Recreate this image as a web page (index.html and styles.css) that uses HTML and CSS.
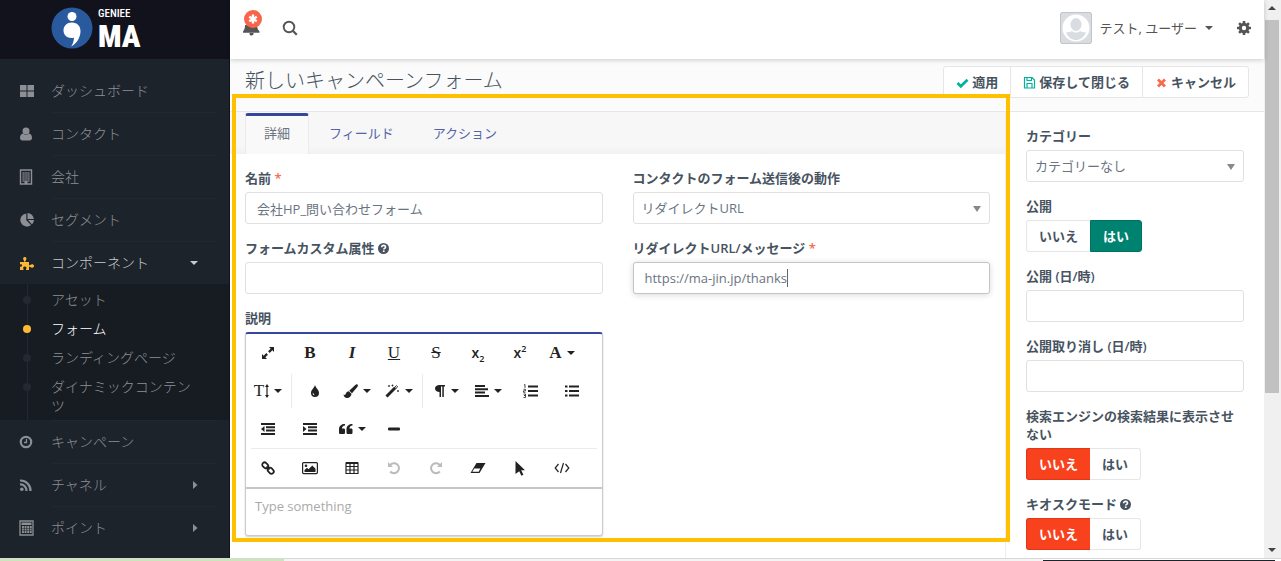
FILE: index.html
```html
<!DOCTYPE html>
<html lang="ja">
<head>
  <meta charset="UTF-8" />
  <meta name="viewport" content="width=device-width, initial-scale=1.0" />
  <title>新しいキャンペーンフォーム</title>
  <link rel="stylesheet" href="styles.css">
</head>
<body>
  <svg class="sprite" aria-hidden="true">
    <symbol id="i-help" viewBox="0 0 12 12">
      <circle cx="6" cy="6" r="6" />
      <path d="M4 4.600C4 3.200 5 2.600 6.100 2.600S8.200 3.300 8.200 4.500C8.200 5.900 6.300 5.900 6.300 7.200" fill="none" stroke="#fff" stroke-width="1.700" />
      <rect x="5.300" y="8.100" width="1.900" height="1.700" fill="#fff" />
    </symbol>
    <symbol id="i-caret" viewBox="0 0 8 4"><path d="M0 0h8L4 4z" /></symbol>
  </svg>

  <div class="window">
    <aside class="sidebar">
      <a class="logo" href="#">
        <svg width="42" height="42" viewBox="0 0 42 42">
          <circle cx="21" cy="21" r="20.500" fill="#2a5a9e" />
          <circle cx="21" cy="9.500" r="4.500" fill="#fff" />
          <path d="M21 15.500c-5 0-8.500 3.500-8.500 8 0 4.400 3.400 7.500 8 7.500 1.500 0 2.500-.2 2.500-.2-.2 4-1.500 6.500-2.800 8.700 5.500-2.800 9.300-9 9.300-15.500 0-5-3.500-8.500-8.500-8.500z" fill="#fff" />
        </svg>
        <span class="logo-text"><small>GENIEE</small><strong>MA</strong></span>
      </a>
      <ul class="menu">
        <li><a href="#">
          <svg width="16" height="16" viewBox="0 0 16 16"><path d="M1 2h6.500v5.500H1zM8.500 2H15v5.500H8.500zM1 8.500h6.500V14H1zM8.500 8.500H15V14H8.500z" /></svg>
          <span>ダッシュボード</span></a></li>
        <li><a href="#">
          <svg width="16" height="16" viewBox="0 0 16 16"><circle cx="7" cy="5" r="3.500" /><path d="M4 7.500c-2 .3-3 2-3 4.500C1 13.500 2 14.500 3.500 14.500h7c1.500 0 2.500-1 2.500-2.500 0-2.500-1-4.200-3-4.500-1.600 1.600-4.400 1.600-6 0z" /></svg>
          <span>コンタクト</span></a></li>
        <li><a href="#">
          <svg width="16" height="16" viewBox="0 0 16 16"><path d="M1.500 1h11v14h-11z" fill="none" stroke="#8c9095" stroke-width="1.400" /><path d="M3.500 4h7M3.500 6h7M3.500 8h7M3.500 10h7M3.500 12h7" stroke="#8c9095" stroke-width="1.300" stroke-dasharray="1.300 .6" /><path d="M5.500 12h3v3h-3z" /></svg>
          <span>会社</span></a></li>
        <li><a href="#">
          <svg width="16" height="16" viewBox="0 0 16 16"><path d="M7.300 1.500A6.500 6.500 0 1 0 12 13L7.300 8.200z" /><path d="M8.500 1A6.500 6.500 0 0 1 14.800 7H8.500z" /><path d="M9 8h6a6.500 6.500 0 0 1-2 4.400z" /></svg>
          <span>セグメント</span></a></li>
        <li class="open"><a href="#">
          <svg width="16" height="16" viewBox="0 0 16 16"><path d="M1 7h4c.6 0 .4-.8 0-1.300C3.600 4 4 2 5.800 2s2.200 2 .8 3.700C6.200 6.200 6 7 6.600 7H10v2.800c0 .8.700.6 1.300.1C12.800 8.800 15 9.200 15 11s-2.200 2.200-3.700 1.100c-.6-.5-1.300-.7-1.300.1V15H7.500c-.8 0-.6-.7-.3-1.200.7-1.300.1-2.300-1.400-2.300s-2.100 1-1.400 2.300c.3.500.5 1.200-.3 1.200H1v-3.500c1.500.5 2-.2 2-1s-.5-1.500-2-1z" /></svg>
          <span>コンポーネント</span>
          <svg class="arrow" width="8" height="4"><use href="#i-caret" /></svg></a>
          <ul class="submenu">
            <li><a href="#">アセット</a></li>
            <li class="active"><a href="#">フォーム</a></li>
            <li><a href="#">ランディングページ</a></li>
            <li><a href="#">ダイナミックコンテンツ</a></li>
          </ul>
        </li>
        <li><a href="#">
          <svg width="16" height="16" viewBox="0 0 16 16"><circle cx="7" cy="8" r="5.200" fill="none" stroke="#8c9095" stroke-width="2.200" /><path d="M7.500 5v3.500H5" fill="none" stroke="#8c9095" stroke-width="1.300" /></svg>
          <span>キャンペーン</span></a></li>
        <li><a href="#">
          <svg width="16" height="16" viewBox="0 0 16 16"><circle cx="2.800" cy="12.200" r="1.800" /><path d="M1 7.500A6 6 0 0 1 7.500 14M1 3.500A10 10 0 0 1 11.500 14" fill="none" stroke="#8c9095" stroke-width="2.200" /></svg>
          <span>チャネル</span>
          <svg class="arrow" width="6" height="8" viewBox="0 0 6 8"><path d="M1 0l4.500 4L1 8z" /></svg></a></li>
        <li><a href="#">
          <svg width="16" height="16" viewBox="0 0 16 16"><path d="M1 1h13v14H1z" fill="none" stroke="#8c9095" stroke-width="1.300" /><path d="M2.500 2.500h10V5h-10z" /><path d="M3 7h10M3 9.500h10M3 12h10" stroke="#8c9095" stroke-width="1.800" stroke-dasharray="1.900 .7" /></svg>
          <span>ポイント</span>
          <svg class="arrow" width="6" height="8" viewBox="0 0 6 8"><path d="M1 0l4.500 4L1 8z" /></svg></a></li>
      </ul>
    </aside>

    <main class="main">
      <header class="topbar">
        <button class="icon-btn" type="button" aria-label="通知">
          <svg width="22" height="28" viewBox="0 0 22 28">
            <path d="M3 15h12c.2 3 .7 4.500 2.500 6.500v1.200H1v-1.200C2.500 19.500 3 18 3 15zM7.500 23h4a2 2 0 0 1-4 1z" fill="#555" />
            <circle cx="11" cy="9" r="9" fill="#f8654b" />
            <path d="M11 4.600v8.800M7.200 6.800l7.600 4.400M14.800 6.800l-7.600 4.400" stroke="#fff" stroke-width="2.400" />
          </svg>
        </button>
        <button class="icon-btn" type="button" aria-label="検索">
          <svg width="16" height="16" viewBox="0 0 16 16"><circle cx="7" cy="7" r="5.300" fill="none" stroke="#555" stroke-width="1.900" /><path d="M10.800 10.800l4 4" stroke="#555" stroke-width="2.200" /></svg>
        </button>
        <button class="user" type="button">
          <svg class="avatar" width="32" height="32" viewBox="0 0 32 32">
            <circle cx="16" cy="16" r="13.500" fill="#fff" />
            <ellipse cx="16" cy="12.500" rx="5.500" ry="6.500" fill="#d9dce1" />
            <path d="M6 20.500c3-.3 5-.5 6-1.500 2 2 6 2 8 0 1 1 3 1.200 6 1.500-2 5-6 7.500-10 7.500s-8-2.500-10-7.500z" fill="#d9dce1" />
          </svg>
          <span>テスト, ユーザー</span>
          <svg width="8" height="4"><use href="#i-caret" /></svg>
        </button>
        <button class="icon-btn" type="button" aria-label="設定">
          <svg width="14" height="14" viewBox="0 0 14 14"><circle cx="7" cy="7" r="3.700" fill="none" stroke="#555" stroke-width="3" /><path d="M7 0v2.500M7 11.500V14M0 7h2.500M11.500 7H14M2.050 2.050l1.800 1.800M10.150 10.150l1.800 1.800M2.050 11.950l1.800-1.800M10.150 3.850l1.800-1.800" stroke="#555" stroke-width="2.600" /></svg>
        </button>
      </header>

      <div class="page-header">
        <h1>新しいキャンペーンフォーム</h1>
        <div class="actions">
          <button type="button"><svg width="13" height="13" viewBox="0 0 13 13"><path d="M1.500 7l3.300 3.300L11.500 3.800" fill="none" stroke="#00b49c" stroke-width="2.700" /></svg>適用</button>
          <button type="button"><svg width="13" height="13" viewBox="0 0 13 13"><path d="M1.500 1.500h7.500L11.500 4V12h-10z M4 1.500v3h4.500v-3 M4 12V7.500h5V12" fill="none" stroke="#00b49c" stroke-width="1.200" /></svg>保存して閉じる</button>
          <button type="button"><svg width="13" height="13" viewBox="0 0 13 13"><path d="M3 3.500l7 7M10 3.500l-7 7" stroke="#f86b4f" stroke-width="2.800" /></svg>キャンセル</button>
        </div>
      </div>

      <div class="content">
        <section class="pane">
          <nav class="tabs">
            <a class="active" href="#">詳細</a>
            <a href="#">フィールド</a>
            <a href="#">アクション</a>
          </nav>
          <form class="form">
            <div class="column">
              <div class="field">
                <label for="name">名前 <em>*</em></label>
                <input id="name" type="text" value="会社HP_問い合わせフォーム">
              </div>
              <div class="field">
                <label for="attr">フォームカスタム属性 <svg width="11" height="11"><use href="#i-help" /></svg></label>
                <input id="attr" type="text">
              </div>
              <div class="field">
                <label for="description">説明</label>
                <div class="editor">
                  <div class="toolbar">
                    <div class="tools">
                      <button type="button" aria-label="全画面"><svg width="14" height="14" viewBox="0 0 14 14"><path d="M8 1h5v5l-1.700-1.700-2.600 2.600-1.600-1.600 2.600-2.600zM6 13H1V8l1.700 1.700 2.600-2.600 1.600 1.600-2.600 2.600z" /></svg></button>
                      <button type="button"><b>B</b></button>
                      <button type="button"><b><i>I</i></b></button>
                      <button type="button"><u>U</u></button>
                      <button type="button"><s>S</s></button>
                      <button type="button" class="sans"><span>x<sub>2</sub></span></button>
                      <button type="button" class="sans"><span>x<sup>2</sup></span></button>
                      <button type="button"><b>A</b><svg width="8" height="4"><use href="#i-caret" /></svg></button>
                    </div>
                    <div class="tools">
                      <button type="button" aria-label="文字サイズ"><span>T</span><svg class="tight" width="4" height="14" viewBox="0 0 4 14"><path d="M2 0l2 3H2.600v8H4l-2 3-2-3h1.400V3H0z" /></svg><svg width="8" height="4"><use href="#i-caret" /></svg></button>
                      <hr>
                      <button type="button" aria-label="色"><svg width="10" height="14" viewBox="0 0 10 14"><path d="M5 1c.7 3 4 4.700 4 8a4 4 0 0 1-8 0c0-3.300 3.300-5 4-8z" /><path d="M3 8.500c-.8 1.500.2 3 1.700 2.800C4.300 10.500 3.500 10 3 8.500z" fill="#fff" /></svg></button>
                      <button type="button" aria-label="書式"><svg width="15" height="14" viewBox="0 0 15 14"><path d="M14.500.5c.8.700.4 1.700-.2 2.500L9 9.300 6.200 6.700 12.300 1c.7-.7 1.500-1 2.200-.5z" /><path d="M5.700 7.300l2.800 2.500C8.300 12.500 6.500 14 4 14 2 14 .8 12.500.5 10.500c1 .7 1.700.6 2.200-.6C3.300 8.300 4.500 7.300 5.700 7.300z" /></svg><svg width="8" height="4"><use href="#i-caret" /></svg></button>
                      <button type="button" aria-label="スタイル"><svg width="15" height="14" viewBox="0 0 15 14"><path d="M1.500 12.500l8.700-8.700" stroke="#222" stroke-width="3" /><path d="M9.800 3.200l1.700-1.600 1.200 1.200L11 4.400z" fill="#fff" stroke="#222" stroke-width=".9" /><path d="M4 1v2M3 2h2M7.500.5v2M6.500 1.500h2M13 6v2M12 7h2" stroke="#222" stroke-width=".8" /></svg><svg width="8" height="4"><use href="#i-caret" /></svg></button>
                      <hr>
                      <button type="button" aria-label="段落"><svg width="12" height="14" viewBox="0 0 12 14"><path d="M11 1v1.500H9.800V13H8.300V2.500H7V13H5.500V8C3 8 1 6.700 1 4.500S3 1 5.500 1z" /></svg><svg width="8" height="4"><use href="#i-caret" /></svg></button>
                      <button type="button" aria-label="配置"><svg width="14" height="14" viewBox="0 0 14 14"><path d="M0 2h10M0 5.300h13M0 8.600h10M0 12h14" stroke="#222" stroke-width="2" /></svg><svg width="8" height="4"><use href="#i-caret" /></svg></button>
                      <button type="button" aria-label="番号付きリスト"><svg width="15" height="14" viewBox="0 0 15 14"><path d="M5 2.500h10M5 7h10M5 11.500h10" stroke="#222" stroke-width="2" /><path d="M1 1l1-.5V4M.5 5.300h2v1.500h-2v1.500h2M.5 10h2v1.500H1h1.500V13.500H.5" fill="none" stroke="#222" stroke-width=".8" /></svg></button>
                      <button type="button" aria-label="箇条書き"><svg width="14" height="14" viewBox="0 0 14 14"><path d="M4 2.500h10M4 7h10M4 11.500h10M0 2.500h2.500M0 7h2.500M0 11.500h2.500" stroke="#222" stroke-width="2.200" /></svg></button>
                    </div>
                    <div class="tools">
                      <button type="button" aria-label="インデント解除"><svg width="14" height="14" viewBox="0 0 14 14"><path d="M0 2h14M5 5.300h9M5 8.600h9M0 12h14" stroke="#222" stroke-width="2" /><path d="M3.500 4v6L0 7z" /></svg></button>
                      <button type="button" aria-label="インデント"><svg width="14" height="14" viewBox="0 0 14 14"><path d="M0 2h14M5 5.300h9M5 8.600h9M0 12h14" stroke="#222" stroke-width="2" /><path d="M0 4v6l3.500-3z" /></svg></button>
                      <button type="button" aria-label="引用"><svg width="14" height="12" viewBox="0 0 14 12"><path id="q" d="M6 1v1.500C4 2.700 3 3.700 3 5.500h1.500C5.500 5.500 6 6 6 7v2.500C6 10.500 5.500 11 4.500 11h-3C.5 11 0 10.500 0 9.500V6c0-3 2.500-5 6-5z" /><use href="#q" x="7.500" /></svg><svg width="8" height="4"><use href="#i-caret" /></svg></button>
                      <button type="button" aria-label="水平線"><svg width="12" height="4" viewBox="0 0 12 4"><rect y=".5" width="12" height="3" rx="1" /></svg></button>
                    </div>
                    <div class="tools insert">
                      <button type="button" aria-label="リンク"><svg width="14" height="14" viewBox="0 0 14 14"><g fill="none" stroke="#222" stroke-width="1.800"><rect x="1" y="2" width="6.500" height="4.600" rx="2.300" transform="rotate(45 4.200 4.300)" /><rect x="6.500" y="7.500" width="6.500" height="4.600" rx="2.300" transform="rotate(45 9.800 9.800)" /><path d="M5.500 5.500l3 3" /></g></svg></button>
                      <button type="button" aria-label="画像"><svg width="16" height="14" viewBox="0 0 16 14"><rect x=".6" y="1.600" width="14.800" height="11" rx="1" fill="none" stroke="#222" stroke-width="1.200" /><circle cx="4" cy="4.800" r="1.300" /><path d="M2.500 11V9L5 6.800l1.500 1.500L10.300 4.500l3.200 3.300V11z" /></svg></button>
                      <button type="button" aria-label="表"><svg width="14" height="14" viewBox="0 0 14 14"><path d="M1 2h12v10.500H1zM1 5.500h12M1 9h12M5 2v10.500M9 2v10.500" fill="none" stroke="#222" stroke-width="1.200" /><path d="M1 1h12v2H1z" /></svg></button>
                      <button type="button" aria-label="元に戻す" disabled><svg width="14" height="14" viewBox="0 0 14 14"><path d="M3 4.200A5 5 0 1 1 3.200 10.500" fill="none" stroke="#bbb" stroke-width="2" /><path d="M1 1v5h5z" fill="#bbb" /></svg></button>
                      <button type="button" aria-label="やり直し" disabled><svg width="14" height="14" viewBox="0 0 14 14"><path d="M11 4.200A5 5 0 1 0 10.800 10.500" fill="none" stroke="#bbb" stroke-width="2" /><path d="M13 1v5H8z" fill="#bbb" /></svg></button>
                      <button type="button" aria-label="書式をクリア"><svg width="16" height="12" viewBox="0 0 16 12"><path d="M6.500 1H15.500L9.500 11H.5z" /><path d="M4.300 6.500h6L8.700 9.700H2.300z" fill="#fff" /></svg></button>
                      <button type="button" aria-label="選択"><svg width="12" height="15" viewBox="0 0 12 15"><path d="M1.500 0l9.500 9.300H7.200l2.200 4.500-2 1-2.200-4.600L1.500 13z" /></svg></button>
                      <button type="button" aria-label="コード"><svg width="16" height="12" viewBox="0 0 16 12"><path d="M4.500 2L1.200 6l3.300 4M11.500 2l3.300 4-3.300 4M9.500 1l-3 10" fill="none" stroke="#222" stroke-width="1.200" /></svg></button>
                    </div>
                  </div>
                  <textarea id="description" placeholder="Type something"></textarea>
                </div>
              </div>
            </div>
            <div class="column">
              <div class="field">
                <label for="post-action">コンタクトのフォーム送信後の動作</label>
                <div class="select">
                  <select id="post-action"><option>リダイレクトURL</option></select>
                </div>
              </div>
              <div class="field">
                <label for="redirect">リダイレクトURL/メッセージ <em>*</em></label>
                <div class="typing">
                  <input id="redirect" class="focused" type="text" value="https://ma-jin.jp/thanks">
                  <span class="cursor"></span>
                </div>
              </div>
            </div>
          </form>
        </section>

        <aside class="options">
          <div class="field">
            <label for="category">カテゴリー</label>
            <div class="select">
              <select id="category"><option>カテゴリーなし</option></select>
            </div>
          </div>
          <fieldset class="field">
            <legend>公開</legend>
            <div class="toggle">
              <label><input type="radio" name="published">いいえ</label>
              <label class="yes"><input type="radio" name="published" checked>はい</label>
            </div>
          </fieldset>
          <div class="field">
            <label for="publish-up">公開 (日/時)</label>
            <input id="publish-up" type="text">
          </div>
          <div class="field">
            <label for="publish-down">公開取り消し (日/時)</label>
            <input id="publish-down" type="text">
          </div>
          <fieldset class="field">
            <legend>検索エンジンの検索結果に表示させない</legend>
            <div class="toggle">
              <label class="no"><input type="radio" name="noindex" checked>いいえ</label>
              <label><input type="radio" name="noindex">はい</label>
            </div>
          </fieldset>
          <fieldset class="field">
            <legend>キオスクモード <svg width="11" height="11"><use href="#i-help" /></svg></legend>
            <div class="toggle">
              <label class="no"><input type="radio" name="kiosk" checked>いいえ</label>
              <label><input type="radio" name="kiosk">はい</label>
            </div>
          </fieldset>
        </aside>
      </div>

      <div class="highlight"></div>
    </main>

    <div class="scrollbar">
      <svg width="8" height="4" viewBox="0 0 8 4"><path d="M0 4h8L4 0z" /></svg>
      <div class="track"><div class="thumb"></div></div>
      <svg width="8" height="4"><use href="#i-caret" /></svg>
    </div>
  </div>
  <div class="strip"><span class="green"></span><span class="grey"></span><span class="dark"></span></div>
</body>
</html>
```

FILE: styles.css
```css
* {
  box-sizing: border-box;
}
body {
  margin: 0;
  height: 100vh;
  display: flex;
  flex-direction: column;
  overflow: hidden;
  background: #fff;
  color: #47535f;
  font-family: "Open Sans", "Noto Sans CJK JP", sans-serif;
  font-size: 13px;
  line-height: 18px;
}
a {
  color: inherit;
  text-decoration: none;
}
ul {
  list-style: none;
  margin: 0;
  padding: 0;
}
button, input, select, textarea {
  font: inherit;
  color: inherit;
}
button {
  background: none;
  border: 0;
  padding: 0;
  cursor: pointer;
}
svg {
  fill: currentColor;
  flex-shrink: 0;
}
.sprite {
  position: absolute;
  width: 0;
  height: 0;
}
.window {
  flex: 1;
  min-height: 0;
  display: flex;
}

/* sidebar */
.sidebar {
  width: 230px;
  flex-shrink: 0;
  overflow: hidden;
  background: #1d232b;
  color: #8c9095;
  border-right: 1px solid #12121c;
}
.logo {
  display: flex;
  gap: 5px;
  height: 59px;
  padding: 7px 0 0 51px;
  background: #12121c;
  color: #fff;
}
.logo-text {
  display: flex;
  flex-direction: column;
  font-family: "Roboto Condensed", "Roboto", sans-serif;
  font-weight: bold;
}
.logo-text small {
  font-size: 11px;
  font-weight: 500;
  line-height: 13px;
}
.logo-text strong {
  font-size: 31px;
  line-height: 34px;
}
.menu {
  padding-top: 10px;
  font-size: 14px;
  font-weight: 300;
}
.menu > li > a {
  display: flex;
  align-items: center;
  height: 43px;
  padding: 0 31px 0 19px;
}
.menu > li > a > span {
  flex: 1;
  margin-left: 16px;
}
.menu > li + li > a {
  background: linear-gradient(#222830, #222830) 52px 0 / 165px 1px no-repeat;
}
.menu .open > a {
  color: #fdb933;
}
.menu .open > a span, .menu .open > a .arrow {
  color: #c8cacc;
}
.submenu {
  padding-top: 1px;
  background: linear-gradient(#222930, #222930) 27px 0 / 1px 100% no-repeat #171b22;
}
.submenu li {
  display: flex;
  padding: 5px 30px 5px 23px;
  line-height: 19px;
}
.submenu li::before {
  content: "";
  width: 8px;
  height: 8px;
  margin: 6px 20px 0 0;
  border-radius: 50%;
  background: #222930;
  flex-shrink: 0;
}
.submenu .active {
  color: #fff;
}
.submenu .active::before {
  background: #fdb933;
}

/* top */
.main {
  position: relative;
  flex: 1;
  min-width: 0;
  display: flex;
  flex-direction: column;
}
.topbar {
  z-index: 1;
  display: flex;
  align-items: center;
  gap: 18px;
  height: 59px;
  padding: 0 13px 0 12px;
  box-shadow: 0 1px 5px rgba(0, 0, 0, 0.2);
  color: #555;
}
.icon-btn, .user {
  display: flex;
  align-items: center;
}
.icon-btn:first-child {
  padding-bottom: 12px;
}
.icon-btn:nth-child(2), .icon-btn:last-child {
  padding-bottom: 3px;
}
.user {
  gap: 8px;
  margin: 0 6px 0 auto;
  padding-bottom: 3px;
}
.avatar {
  background: #d9dce1;
  outline: 1px solid #c3c5c9;
  outline-offset: -1px;
  border-radius: 3px;
}
.page-header {
  display: flex;
  justify-content: space-between;
  height: 53px;
  padding: 7px 15px 0;
  background: #fbfbfb;
  border-bottom: 1px solid #e6e6e6;
}
h1 {
  margin: 0;
  font-size: 20px;
  font-weight: 300;
  line-height: 30px;
}
.actions {
  display: flex;
  height: 32px;
  background: #fff;
  border: 1px solid #e6e6e6;
  border-radius: 3px;
}
.actions button {
  display: flex;
  align-items: center;
  gap: 3px;
  padding: 0 12px;
  font-weight: 600;
}
.actions button + button {
  border-left: 1px solid #e6e6e6;
}

/* content */
.content {
  flex: 1;
  min-height: 0;
  display: flex;
}
.pane {
  flex: 1;
}
.tabs {
  display: flex;
  gap: 1px;
  height: 42px;
  padding: 1px 15px 0;
  background: linear-gradient(#f7f7f7 80%, #f1f1f1);
  color: #5564a8;
}
.tabs a {
  padding: 0 18px;
  border: 1px solid transparent;
  border-bottom: 0;
  border-top: 3px solid transparent;
  border-radius: 3px 3px 0 0;
  line-height: 34px;
}
.tabs .active {
  background: #f9f9f9;
  border-color: #ebebeb;
  border-top-color: #35479b;
  color: #6a7480;
}
.form {
  display: grid;
  grid-template-columns: 1fr 1fr;
  gap: 30px;
  padding: 15px;
}
.options {
  width: 259px;
  padding: 15px 20px 0;
  border-left: 1px solid #ededed;
  overflow: hidden;
}
.field {
  min-width: 0;
  margin: 0 0 15px;
  padding: 0;
  border: 0;
}
.field > label, legend {
  display: block;
  margin-bottom: 5px;
  padding: 0;
  font-weight: 600;
}
.field > label svg, legend svg {
  margin-bottom: -1px;
}
em {
  color: #f86b4f;
  font-style: normal;
}
input[type="text"], select {
  display: block;
  width: 100%;
  height: 32px;
  padding: 0 11px;
  border: 1px solid #e0e0e0;
  border-radius: 3px;
  background: #fff;
  color: #6a7480;
  outline: 0;
}
select {
  appearance: none;
  padding: 0 8px;
}
.select, .typing {
  position: relative;
}
.select::after {
  content: "";
  position: absolute;
  right: 9px;
  top: 14px;
  border: 4px solid transparent;
  border-top: 6px solid #888;
  border-bottom: 0;
}
.typing .focused {
  border-color: #c4c4c4;
  box-shadow: 0 1px 6px rgba(0, 0, 0, 0.15);
}
.cursor {
  position: absolute;
  left: 154px;
  top: 7px;
  width: 1px;
  height: 18px;
  background: #666;
}
.toggle {
  display: inline-flex;
  vertical-align: top;
  height: 32px;
}
.toggle label {
  padding: 0 12px;
  border: 1px solid #e6e6e6;
  border-radius: 0 3px 3px 0;
  line-height: 30px;
  font-weight: 600;
}
.toggle label:first-child {
  border-right: 0;
  border-radius: 3px 0 0 3px;
}
.toggle .yes + label, .toggle .no + label {
  border-left: 0;
}
.toggle input {
  position: absolute;
  opacity: 0;
  pointer-events: none;
}
.toggle .yes {
  background: #008270;
  border-color: #00705f;
  color: #fff;
}
.toggle .no {
  background: #f8421e;
  border-color: #e23614;
  color: #fff;
}

/* editor */
.editor {
  border: 1px solid #ccc;
  border-top: 2px solid #35479b;
  border-radius: 3px;
  box-shadow: 0 1px 2px rgba(0, 0, 0, 0.2);
}
.toolbar {
  padding: 0 1px;
  border-bottom: 2px solid #c6c6c6;
  color: #222;
}
.tools {
  display: flex;
  height: 38px;
}
.tools button {
  display: flex;
  align-items: center;
  justify-content: center;
  gap: 5px;
  width: 42px;
  font-family: "Liberation Serif", serif;
  font-size: 17px;
}
.tools .sans {
  font-family: "Open Sans", sans-serif;
  font-size: 14px;
  font-weight: 600;
}
.tools sub, .tools sup {
  font-size: 9px;
  line-height: 1;
}
.tools .tight {
  margin-left: -4px;
}
.tools hr {
  width: 1px;
  height: 34px;
  margin: 2px;
  border: 0;
  background: #ebebeb;
}
.insert {
  height: 39px;
  margin: 0 4px;
  border-top: 1px solid #ebebeb;
}
.insert button:first-child {
  margin-left: -4px;
}
textarea {
  display: block;
  width: 100%;
  height: 46px;
  padding: 8px 9px;
  border: 0;
  background: none;
  resize: none;
}
textarea::placeholder {
  color: #aaa;
}

/* box round the form */
.highlight {
  position: absolute;
  z-index: 2;
  top: 94px;
  right: 254px;
  bottom: 16px;
  left: 2px;
  border: 4px solid #ffc000;
  pointer-events: none;
}

.scrollbar {
  display: flex;
  flex-direction: column;
  align-items: center;
  width: 17px;
  padding: 6px 2px 6px 1px;
  background: #f0f0f0;
  color: #444;
}
.track {
  flex: 1;
  width: 100%;
  padding: 10px 0;
}
.thumb {
  height: 72%;
  background: #c1c1c1;
}
.strip {
  display: flex;
  height: 3px;
  border-top: 1px solid #d8d8d8;
}
.green {
  width: 284px;
  background: #c9e7b8;
}
.grey {
  flex: 1;
  background: #f4f4f4;
}
.dark {
  width: 232px;
  margin: 1px 6px 0 0;
  background: #1d232b;
}
```
